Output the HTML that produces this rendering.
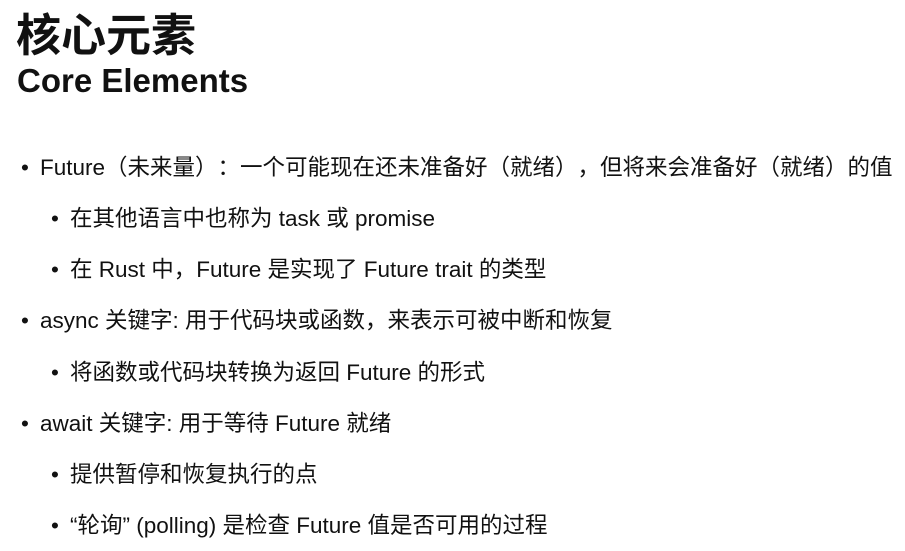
<!DOCTYPE html>
<html><head><meta charset="utf-8"><style>
body{margin:0;width:905px;height:551px;background:#fff;overflow:hidden;font-family:"Liberation Sans","Noto Sans CJK SC",sans-serif;color:#111;position:relative;text-spacing-trim:space-all}
.t1{position:absolute;left:16px;top:4px;font-size:45px;font-weight:bold;line-height:56px;font-family:"Noto Sans CJK SC",sans-serif}
.t2{position:absolute;left:17px;top:61px;font-size:33px;font-weight:bold;line-height:40px}
.l{position:absolute;font-size:22.5px;line-height:30px;white-space:nowrap}
.l:before{content:"•";position:absolute;left:-19px}
.a{left:40px}.b{left:70px}
</style></head><body>
<div class="t1">核心元素</div>
<div class="t2">Core Elements</div>
<div class="l a" style="top:153px">Future（未来量）：一个可能现在还未准备好（就绪），但将来会准备好（就绪）的值</div>
<div class="l b" style="top:204px">在其他语言中也称为 task 或 promise</div>
<div class="l b" style="top:255px">在 Rust 中，Future 是实现了 Future trait 的类型</div>
<div class="l a" style="top:306px">async 关键字: 用于代码块或函数，来表示可被中断和恢复</div>
<div class="l b" style="top:358px">将函数或代码块转换为返回 Future 的形式</div>
<div class="l a" style="top:409px">await 关键字: 用于等待 Future 就绪</div>
<div class="l b" style="top:460px">提供暂停和恢复执行的点</div>
<div class="l b" style="top:511px">“轮询” (polling) 是检查 Future 值是否可用的过程</div>
</body></html>
